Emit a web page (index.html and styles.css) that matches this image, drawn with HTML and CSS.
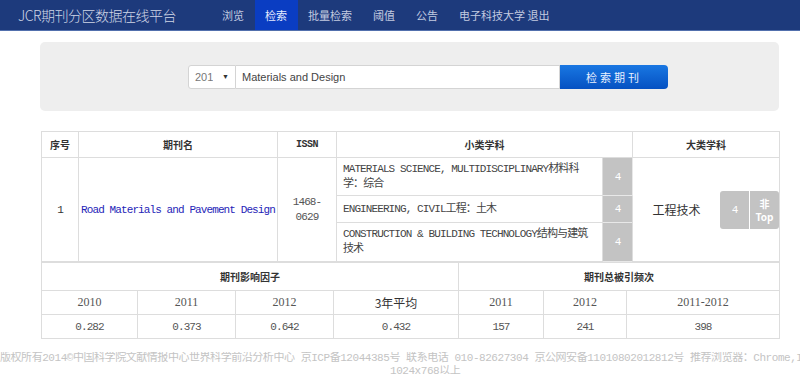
FILE: index.html
```html
<!DOCTYPE html>
<html lang="zh-CN">
<head>
    <meta charset="UTF-8">
    <meta name="viewport" content="width=device-width, initial-scale=1.0">
    <title>JCR期刊分区数据在线平台</title>
    <link rel="stylesheet" href="styles.css">
</head>
<body>
    <nav class="topbar">
        <a class="brand" href="#">JCR期刊分区数据在线平台</a>
        <ul class="menu">
            <li><a href="#">浏览</a></li>
            <li class="active"><a href="#">检索</a></li>
            <li><a href="#">批量检索</a></li>
            <li><a href="#">阈值</a></li>
            <li><a href="#">公告</a></li>
            <li><a href="#">电子科技大学 退出</a></li>
        </ul>
    </nav>

    <div class="container">
        <!-- search panel -->
        <div class="search-panel">
            <div class="search-form">
                <div class="year-select">
                    <span class="year-text">2013</span>
                    <span class="arrow">&#9660;</span>
                </div>
                <div class="search-input">Materials and Design</div>
                <button class="search-btn">检索期刊</button>
            </div>
        </div>

        <!-- result -->
        <table class="result">
            <colgroup>
                <col style="width:37px">
                <col style="width:199px">
                <col style="width:59px">
                <col style="width:266px">
                <col style="width:30px">
                <col style="width:147px">
            </colgroup>
            <tr class="head">
                <th>序号</th>
                <th>期刊名</th>
                <th class="mono">ISSN</th>
                <th colspan="2">小类学科</th>
                <th>大类学科</th>
            </tr>
            <tr class="sub-a">
                <td rowspan="3" class="center">1</td>
                <td rowspan="3" class="center"><a class="journal" href="#">Road Materials and Pavement Design</a></td>
                <td rowspan="3" class="center issn">1468-<br>0629</td>
                <td class="subject">MATERIALS SCIENCE, MULTIDISCIPLINARY材料科学：综合</td>
                <td class="zone">4</td>
                <td rowspan="3" class="major">
                    <div class="major-box">
                        <span class="major-name">工程技术</span>
                        <span class="major-zone">4</span>
                        <span class="major-top"><span>非</span><span>Top</span></span>
                    </div>
                </td>
            </tr>
            <tr class="sub-b">
                <td class="subject">ENGINEERING, CIVIL工程：土木</td>
                <td class="zone">4</td>
            </tr>
            <tr class="sub-c">
                <td class="subject">CONSTRUCTION &amp; BUILDING TECHNOLOGY结构与建筑技术</td>
                <td class="zone">4</td>
            </tr>
        </table>

        <table class="result stats">
            <colgroup>
                <col style="width:96px">
                <col style="width:98px">
                <col style="width:98px">
                <col style="width:125px">
                <col style="width:85px">
                <col style="width:83px">
                <col style="width:153px">
            </colgroup>
            <tr class="head">
                <th colspan="4">期刊影响因子</th>
                <th colspan="3">期刊总被引频次</th>
            </tr>
            <tr class="years">
                <td>2010</td>
                <td>2011</td>
                <td>2012</td>
                <td class="avg">3年平均</td>
                <td>2011</td>
                <td>2012</td>
                <td>2011-2012</td>
            </tr>
            <tr class="values">
                <td>0.282</td>
                <td>0.373</td>
                <td>0.642</td>
                <td>0.432</td>
                <td>157</td>
                <td>241</td>
                <td>398</td>
            </tr>
        </table>
    </div>

    <div class="footer">
        <div class="footer-line">版权所有2014©中国科学院文献情报中心世界科学前沿分析中心 京ICP备12044385号 联系电话 010-82627304 京公网安备11010802012812号 推荐浏览器：Chrome,IE9以上，分辨率</div>
        <div class="footer-line second">1024x768以上</div>
    </div>
</body>
</html>
```

FILE: styles.css
```css
html, body {
    margin: 0;
    padding: 0;
    overflow: hidden;
}
body {
    font-family: "Liberation Mono", "Noto Sans CJK SC", monospace;
    font-size: 11px;
    color: #333;
    background-color: #fff;
}
.topbar {
    height: 30px;
    background-color: #1d3a7c;
    border-bottom: 1px solid #5270ad;
    display: flex;
    align-items: center;
    font-family: "Noto Sans CJK SC", sans-serif;
}
.brand {
    color: #cfd6e6;
    text-decoration: none;
    font-size: 14px;
    font-weight: 300;
    letter-spacing: -0.5px;
    padding-left: 18px;
    width: 193.5px;
    line-height: 30px;
}
.menu {
    list-style-type: none;
    margin: 0;
    padding: 0;
    display: flex;
    height: 30px;
}
.menu li a {
    display: block;
    padding: 0 10.5px;
    line-height: 30px;
    font-size: 11px;
    color: #c3cbe0;
    text-decoration: none;
}
.menu li.active a {
    background-color: #0a3dc2;
    color: #e6ecff;
}
.container {
    padding-left: 40px;
    width: 739px;
}
.search-panel {
    margin-top: 11px;
    height: 69px;
    background-color: #eeeeee;
    border-radius: 5px;
    display: flex;
    align-items: center;
}
.search-form {
    display: flex;
    margin-left: 148px;
    height: 24px;
}
.year-select {
    width: 46px;
    height: 22px;
    border: 1px solid #d4d4d4;
    border-radius: 3px 0 0 3px;
    background-color: #fff;
    display: flex;
    align-items: center;
    font-family: "Liberation Sans", sans-serif;
}
.year-text {
    width: 18px;
    margin-left: 6px;
    overflow: hidden;
    white-space: nowrap;
    color: #777;
    font-size: 11px;
}
.arrow {
    font-size: 7px;
    margin-left: 9px;
    color: #333;
}
.search-input {
    width: 317px;
    height: 22px;
    line-height: 22px;
    padding-left: 6px;
    border: 1px solid #d4d4d4;
    border-left: none;
    background-color: #fff;
    font-family: "Liberation Sans", sans-serif;
    font-size: 11px;
    color: #444;
}
.search-btn {
    width: 108px;
    height: 24px;
    border: none;
    border-radius: 0 4px 4px 0;
    background: linear-gradient(#1977e2, #0551c2);
    color: #e8f0ff;
    font-family: "Noto Sans CJK SC", sans-serif;
    font-size: 11px;
    letter-spacing: 3px;
    padding: 0;
}
.result {
    border-collapse: collapse;
    table-layout: fixed;
    width: 739px;
    margin-left: 1px;
    letter-spacing: -0.9px;
}
.result:first-of-type {
    margin-top: 20px;
}
.result th,
.result td {
    border: 1px solid #dddddd;
    padding: 0;
}
.result th {
    font-family: "Noto Sans CJK SC", sans-serif;
    font-weight: bold;
    font-size: 10px;
    letter-spacing: 0;
    color: #333;
}
.result th.mono {
    font-family: "Liberation Mono", monospace;
    font-size: 10px;
    letter-spacing: -0.5px;
}
.result .head {
    height: 26px;
}
.center {
    text-align: center;
}
.journal {
    color: #1f25b8;
    text-decoration: none;
    font-size: 11px;
}
.issn {
    color: #555;
    line-height: 15px;
}
.subject {
    padding: 0 6px !important;
    line-height: 15px;
    color: #444;
}
.sub-a {
    height: 38px;
}
.sub-b {
    height: 27px;
}
.sub-c {
    height: 39px;
}
.zone {
    background-color: #c3c3c3;
    color: #fff;
    text-align: center;
    border-color: #e8e8e8 !important;
}
.major-box {
    display: flex;
    align-items: center;
    height: 38px;
}
.major-name {
    flex: 1;
    text-align: center;
    font-family: "Noto Sans CJK SC", sans-serif;
    font-size: 12px;
    letter-spacing: 0;
    color: #333;
}
.major-zone,
.major-top {
    width: 29px;
    height: 38px;
    background-color: #c3c3c3;
    color: #fff;
    display: flex;
    align-items: center;
    justify-content: center;
}
.major-zone {
    border-radius: 3px 0 0 3px;
    margin-right: 1px;
}
.major-top {
    flex-direction: column;
    border-radius: 0 3px 3px 0;
    font-family: "Noto Sans CJK SC", sans-serif;
    font-size: 10px;
    line-height: 13px;
    letter-spacing: 0;
    font-weight: bold;
}
.stats td {
    text-align: center;
    color: #555;
}
.stats .head {
    height: 28px;
}
.years {
    height: 24px;
}
.years td {
    font-family: "Liberation Serif", "Noto Sans CJK SC", serif;
    font-size: 12px;
    letter-spacing: 0;
}
.years td.avg {
    font-family: "Noto Sans CJK SC", sans-serif;
    font-size: 12px;
    color: #333;
}
.values {
    height: 24px;
}
.footer {
    margin-top: 13px;
    color: #c4c4c4;
    font-size: 11px;
    letter-spacing: -0.45px;
    line-height: 13px;
    white-space: nowrap;
}
.footer-line {
    overflow: hidden;
}
.footer-line.second {
    padding-left: 390px;
}
```
